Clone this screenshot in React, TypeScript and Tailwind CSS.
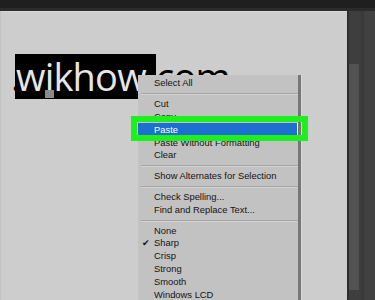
const sections: { label: string; checked?: boolean; hot?: boolean }[][] = [
  [{ label: "Select All" }],
  [
    { label: "Cut" },
    { label: "Copy" },
    { label: "Paste", hot: true },
    { label: "Paste Without Formatting" },
    { label: "Clear" },
  ],
  [{ label: "Show Alternates for Selection" }],
  [{ label: "Check Spelling..." }, { label: "Find and Replace Text..." }],
  [
    { label: "None" },
    { label: "Sharp", checked: true },
    { label: "Crisp" },
    { label: "Strong" },
    { label: "Smooth" },
    { label: "Windows LCD" },
  ],
];

const ContextMenu = () => (
  <div className="absolute left-[137px] top-[64px] w-[163px] h-[240px] bg-[#c2c2c2] border-r-[3px] border-r-[#777] shadow-[1px_0_0_#d8d8d8] pt-[2px] font-['Liberation_Sans',sans-serif] text-[9.4px] text-[#141414]">
    {sections.map((items, i) => (
      <div key={i}>
        {i > 0 && (
          <div className="h-[8px] flex items-center pl-[3px]">
            <div className="w-full h-px bg-[#a6a6a6] shadow-[0_1px_0_#d2d2d2]" />
          </div>
        )}
        {items.map((it) => (
          <div
            key={it.label}
            className={
              it.hot
                ? "relative h-[12.8px] flex items-center pl-[16px] bg-[#1d6fd1] text-white border-r border-white"
                : "relative h-[12.8px] flex items-center pl-[16px]"
            }
          >
            {it.checked && (
              <span className="absolute left-[4px] text-[9px]">✔</span>
            )}
            {it.label}
          </div>
        ))}
      </div>
    ))}
  </div>
);

export default function App() {
  return (
    <div className="w-[375px] h-[300px] overflow-hidden flex flex-col bg-[#1f1f1f]">
      <div className="h-[8px] bg-[#1f1f1f]" />
      <div className="h-[3px] bg-[#2b2b2b]" />
      <div className="flex flex-1">
        <div className="relative w-[347px] bg-[#cdcdcd] border-l border-[#c4c4c4] shadow-[inset_0_1px_0_#d9d9d9]">
          <div className="pt-[43px] pl-[14px] flex items-end font-['Open_Sans',sans-serif] text-[38px] leading-[45px] tracking-[-0.8px]">
            <span className="relative bg-black text-[#e6e6e6] pl-[1px] pr-[1px]">
              <span className="absolute left-[-4px] top-0 text-black">.</span>
              wikhow.
              <span className="absolute left-[30px] top-[36px] w-[9px] h-[8px] bg-[#8a8a8a]" />
            </span>
            <span className="text-black">com</span>
          </div>
          <ContextMenu />
          <div className="absolute left-[130px] top-[105px] w-[177px] h-[25px] border-[6px] border-[#1ef01e]" />
        </div>
        <div className="flex-1 flex bg-[#3e3e3e]">
          <div className="w-[2px] bg-[#2c2c2c]" />
          <div className="w-[12px] pt-[53px] pb-[10px] flex">
            <div className="w-[10px] h-full bg-[#525252]" />
          </div>
          <div className="w-[3px] bg-[#393939]" />
          <div className="flex-1 bg-[#414141]" />
        </div>
      </div>
    </div>
  );
}
